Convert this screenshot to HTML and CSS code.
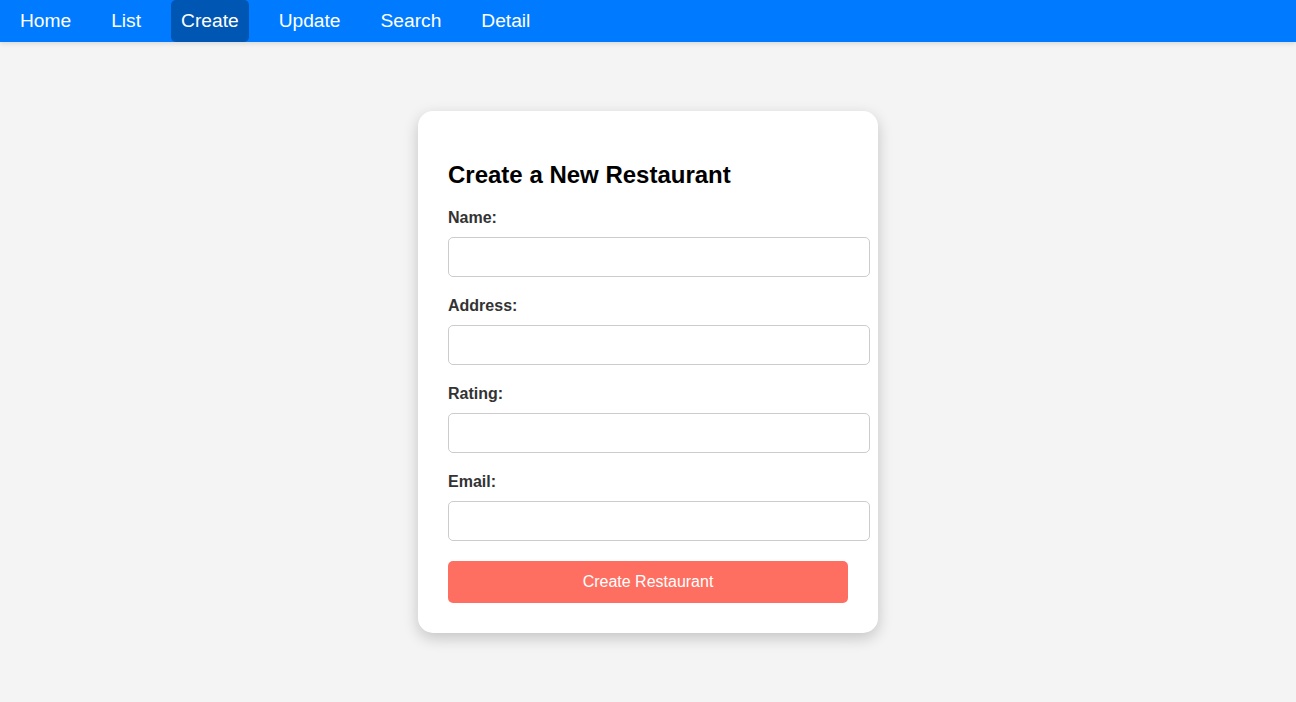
FILE: index.html
```html
<!DOCTYPE html>
<html lang="en">
<head>
<meta charset="utf-8">
<title>Create a New Restaurant</title>
<link rel="stylesheet" href="styles.css">
</head>
<body>
<nav class="navbar">
  <a class="nav-link" href="#">Home</a>
  <a class="nav-link" href="#">List</a>
  <a class="nav-link active" href="#">Create</a>
  <a class="nav-link" href="#">Update</a>
  <a class="nav-link" href="#">Search</a>
  <a class="nav-link" href="#">Detail</a>
</nav>
<main class="main">
  <div class="card">
    <h2 class="title">Create a New Restaurant</h2>
    <form class="form">
      <label class="label" for="name">Name:</label>
      <input class="input" id="name" type="text">
      <label class="label" for="address">Address:</label>
      <input class="input" id="address" type="text">
      <label class="label" for="rating">Rating:</label>
      <input class="input" id="rating" type="text">
      <label class="label" for="email">Email:</label>
      <input class="input" id="email" type="text">
      <button class="button" type="button">Create Restaurant</button>
    </form>
  </div>
</main>
</body>
</html>
```
FILE: styles.css
```css
html, body {
  margin: 0;
  padding: 0;
}
body {
  background: #f4f4f4;
  font-family: "Liberation Sans", Arial, sans-serif;
}
.navbar {
  display: flex;
  gap: 20px;
  padding: 0 10px;
  height: 42px;
  background: #007bff;
  box-shadow: 0 2px 4px rgba(0, 0, 0, 0.1);
  position: relative;
  z-index: 1;
}
.nav-link {
  color: #ffffff;
  text-decoration: none;
  font-size: 19.2px;
  line-height: 22px;
  padding: 10px;
  border-radius: 5px;
}
.nav-link.active {
  background: #0056b3;
}
.main {
  display: flex;
  justify-content: center;
  align-items: center;
  min-height: calc(100vh - 42px);
}
.card {
  width: 400px;
  padding: 30px;
  background: #ffffff;
  border-radius: 15px;
  box-shadow: 0 5px 15px rgba(0, 0, 0, 0.2);
}
.title {
  font-size: 24px;
  font-weight: bold;
  color: #000;
  margin: 20px 0;
}
.form {
  display: flex;
  flex-direction: column;
  align-items: flex-start;
}
.label {
  display: block;
  font-size: 16px;
  font-weight: bold;
  color: #333;
  margin-bottom: 10px;
}
.input {
  box-sizing: content-box;
  width: 100%;
  height: 18px;
  padding: 10px;
  margin: 0 0 20px;
  border: 1px solid #ccc;
  border-radius: 5px;
  font-size: 16px;
  font-family: inherit;
  background: #fff;
}
.button {
  width: 100%;
  height: 42px;
  padding: 0;
  border: none;
  border-radius: 5px;
  background: #ff6f61;
  color: #ffffff;
  font-size: 16px;
  font-family: inherit;
}
```
